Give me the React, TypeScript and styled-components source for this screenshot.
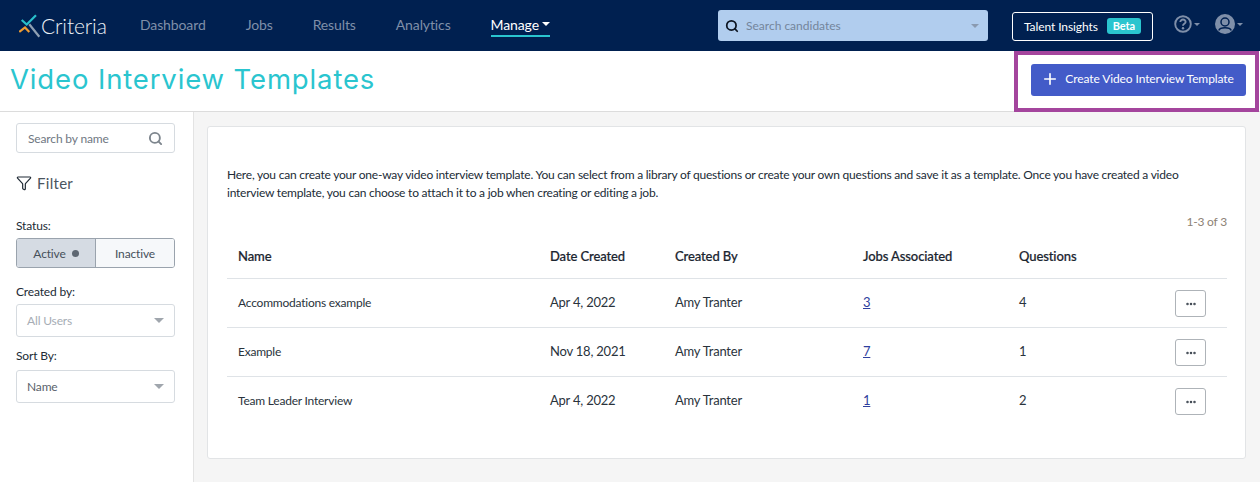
import styled, { createGlobalStyle } from "styled-components";
import { Search, Funnel, Plus, Ellipsis } from "lucide-react";

const GlobalStyle = createGlobalStyle`
  html, body {
    margin: 0;
    padding: 0;
    background: #fff;
    font-family: Lato, "Liberation Sans", sans-serif;
    color: #212b36;
  }
  * { box-sizing: border-box; }
`;

const Page = styled.div`
  width: 1260px;
  height: 482px;
  overflow: hidden;
  display: flex;
  flex-direction: column;
`;

const TopNav = styled.nav`
  height: 51px;
  flex: none;
  background: #002050;
  display: flex;
  align-items: center;
  padding-left: 19px;
`;

const Logo = styled.div`
  width: 88px;
  display: flex;
  align-items: center;
  color: #eef2f6;
  font-size: 21px;
  font-weight: 300;
  letter-spacing: -0.1px;
`;

const LogoWord = styled.span`
  margin-left: -2px;
`;

const NavLinks = styled.div`
  display: flex;
  gap: 40px;
  margin-left: 33px;
  width: 578px;
  letter-spacing: -0.12px;
`;

const NavLink = styled.span<{ $active?: boolean }>`
  font-size: 14px;
  line-height: 19px;
  height: 22px;
  margin-top: 1px;
  color: ${(p) => (p.$active ? "#fff" : "#7f8fa9")};
  border-bottom: ${(p) => (p.$active ? "2px solid #2ac5cf" : "none")};
  display: flex;
  align-items: flex-start;
  gap: 3px;
`;

const Caret = styled.span<{ $color?: string; $size?: number }>`
  display: inline-block;
  width: 0;
  height: 0;
  border-left: ${(p) => p.$size ?? 4}px solid transparent;
  border-right: ${(p) => p.$size ?? 4}px solid transparent;
  border-top: ${(p) => p.$size ?? 4}px solid ${(p) => p.$color ?? "#fff"};
`;

const MenuCaret = styled(Caret)`
  margin-top: 7px;
`;

const CandidateSearch = styled.div`
  width: 270px;
  height: 31px;
  background: #b1cdee;
  border-radius: 3px;
  display: flex;
  align-items: center;
  padding: 0 9px 0 7px;
  font-size: 12px;
  color: #74859c;
  gap: 7px;
`;

const Grow = styled.span`
  flex: 1;
`;

const InsightsButton = styled.div`
  width: 141px;
  height: 29px;
  margin-left: 24px;
  margin-top: 1px;
  border: 1px solid #fff;
  border-radius: 3px;
  color: #fff;
  font-size: 12px;
  letter-spacing: -0.1px;
  display: flex;
  align-items: center;
  justify-content: center;
  gap: 9px;
`;

const BetaBadge = styled.span`
  background: #2ac5cf;
  border-radius: 3px;
  font-size: 11px;
  font-weight: 700;
  padding: 1px 6px;
  line-height: 14px;
`;

const IconMenu = styled.div<{ $left: number }>`
  margin-left: ${(p) => p.$left}px;
  display: flex;
  align-items: center;
  gap: 2px;
  margin-top: -3px;
`;

const TitleBar = styled.header`
  height: 61px;
  flex: none;
  border-bottom: 1px solid #dcdcdc;
  display: flex;
  align-items: center;
  justify-content: space-between;
  padding: 0 14px 3px 10px;
  position: relative;
`;

const Title = styled.h1`
  margin: 0 0 1px;
  font-family: Inter, "Open Sans", sans-serif;
  font-size: 27.5px;
  font-weight: 400;
  color: #2ac5cf;
  letter-spacing: 0.86px;
`;

const CreateButton = styled.button`
  width: 215px;
  height: 32px;
  border: none;
  border-radius: 3px;
  background: #435bc8;
  color: #fff;
  font-family: inherit;
  font-size: 12px;
  letter-spacing: -0.1px;
  display: flex;
  align-items: center;
  justify-content: center;
  gap: 6px;
  padding: 0 2px 2px 0;
`;

const Highlight = styled.div`
  position: absolute;
  left: 1014px;
  top: 0;
  width: 245px;
  height: 61px;
  border: 4px solid #a4459d;
  pointer-events: none;
`;

const Body = styled.div`
  flex: 1;
  display: flex;
  min-height: 0;
`;

const Sidebar = styled.aside`
  width: 194px;
  flex: none;
  border-right: 1px solid #e3e3e3;
  padding: 11px 18px 0 16px;
  letter-spacing: -0.15px;
`;

const NameSearch = styled.div`
  height: 30px;
  border: 1px solid #d6dbe0;
  border-radius: 3px;
  display: flex;
  align-items: center;
  justify-content: space-between;
  padding: 0 11px;
  font-size: 12px;
  color: #6f7782;
`;

const FilterHeading = styled.div`
  display: flex;
  align-items: center;
  gap: 5px;
  margin-top: 20px;
  font-size: 15px;
  color: #4a5560;
  height: 20px;
  letter-spacing: 0.3px;
`;

const FieldLabel = styled.div<{ $top: number; $bottom?: number }>`
  margin-top: ${(p) => p.$top}px;
  margin-bottom: ${(p) => p.$bottom ?? 5}px;
  font-size: 12px;
  line-height: 15px;
  color: #212b36;
`;

const Toggle = styled.div`
  display: flex;
  height: 30px;
  border: 1px solid #9aa3ad;
  border-radius: 3px;
  overflow: hidden;
  font-size: 12px;
`;

const ToggleItem = styled.div<{ $on?: boolean }>`
  width: ${(p) => (p.$on ? 79 : 78)}px;
  background: ${(p) => (p.$on ? "#d5dbe3" : "#f6f8fa")};
  border-right: ${(p) => (p.$on ? "1px solid #9aa3ad" : "none")};
  display: flex;
  align-items: center;
  justify-content: center;
  gap: 6px;
  color: #46505a;
`;

const Dot = styled.span`
  width: 7px;
  height: 7px;
  border-radius: 50%;
  background: #5e6772;
`;

const SelectBox = styled.div<{ $muted?: boolean }>`
  height: 33px;
  border: 1px solid #d6dbe0;
  border-radius: 3px;
  display: flex;
  align-items: center;
  justify-content: space-between;
  padding: 0 10px;
  font-size: 12px;
  color: ${(p) => (p.$muted ? "#a6adb5" : "#59626c")};
`;

const Main = styled.main`
  flex: 1;
  background: #f5f5f5;
  padding: 14px 14px 22px 13px;
`;

const Card = styled.section`
  height: 333px;
  background: #fff;
  border: 1px solid #e2e4e6;
  border-radius: 3px;
  padding: 39px 18px 0 19px;
`;

const Intro = styled.p`
  margin: 0;
  font-size: 12px;
  line-height: 18px;
  letter-spacing: -0.22px;
  color: #212b36;
  width: 962px;
`;

const Count = styled.div`
  text-align: right;
  font-size: 12px;
  letter-spacing: -0.2px;
  color: #8d8275;
  margin-top: 12px;
  line-height: 16px;
`;

const Table = styled.table`
  width: 100%;
  border-collapse: collapse;
  table-layout: fixed;
  margin-top: 4px;
  font-size: 13px;
`;

const Th = styled.th<{ $w?: number }>`
  width: ${(p) => (p.$w ? `${p.$w}px` : "auto")};
  height: 44px;
  padding: 0 0 0 11px;
  text-align: left;
  font-weight: 500;
  font-size: 13px;
  letter-spacing: -0.1px;
  color: #1b2530;
  -webkit-text-stroke: 0.2px #1b2530;
  border-bottom: 1px solid #dfe3e7;
`;

const Td = styled.td`
  height: 49px;
  padding: 0 0 2px 11px;
  font-size: 13px;
  letter-spacing: -0.22px;
  color: #2a333c;
  border-bottom: 1px solid #dfe3e7;
  tr:last-child & {
    border-bottom: none;
  }
`;

const NameCell = styled(Td)`
  padding-bottom: 0;
  font-size: 12px;
`;

const ActionCell = styled(Td)`
  padding-bottom: 0;
`;

const JobsLink = styled.a`
  color: #2f3f9e;
  text-decoration: underline;
`;

const MoreButton = styled.button`
  width: 31px;
  height: 27px;
  margin: 2px 0 0;
  background: #fff;
  border: 1px solid #aeb3b8;
  border-radius: 3px;
  display: flex;
  align-items: center;
  justify-content: center;
  padding: 0;
  color: #3d4650;
`;

const rows = [
  { name: "Accommodations example", date: "Apr 4, 2022", jobs: 3, questions: 4 },
  { name: "Example", date: "Nov 18, 2021", jobs: 7, questions: 1 },
  { name: "Team Leader Interview", date: "Apr 4, 2022", jobs: 1, questions: 2 },
];

function CriteriaMark() {
  return (
    <svg width="24" height="24" viewBox="0 0 24 24" fill="none">
      <path d="M2.7 6 L7.7 10.6 L17 1.3" stroke="#29c0cb" strokeWidth="2.2" />
      <path d="M0.3 18 L6 13.4 L10.3 18" stroke="#ee9c33" strokeWidth="2.2" />
      <path d="M10.3 10.3 L20.3 22.7" stroke="#8fa0b3" strokeWidth="2.2" />
    </svg>
  );
}

function HelpIcon() {
  return (
    <svg width="18" height="18" viewBox="0 0 18 18" fill="none">
      <circle cx="9" cy="9" r="7.8" stroke="#7f8fa9" strokeWidth="1.9" />
      <path d="M6.3 7 C6.3 3.6 11.8 3.9 11.6 7 C11.5 8.9 9 8.6 9 10.7" stroke="#7f8fa9" strokeWidth="1.9" />
      <circle cx="9" cy="13.2" r="1.2" fill="#7f8fa9" />
    </svg>
  );
}

function UserIcon() {
  return (
    <svg width="20" height="20" viewBox="0 0 20 20">
      <circle cx="10" cy="10" r="10" fill="#7f8fa9" />
      <circle cx="10" cy="8" r="4" fill="#7f8fa9" stroke="#002050" strokeWidth="1.5" />
      <path d="M3.8 16.5 C5 12.8 15 12.8 16.2 16.5" fill="#7f8fa9" stroke="#002050" strokeWidth="1.5" />
    </svg>
  );
}

export default function App() {
  return (
    <Page>
      <GlobalStyle />
      <TopNav>
        <Logo>
          <CriteriaMark />
          <LogoWord>Criteria</LogoWord>
        </Logo>
        <NavLinks>
          <NavLink>Dashboard</NavLink>
          <NavLink>Jobs</NavLink>
          <NavLink>Results</NavLink>
          <NavLink>Analytics</NavLink>
          <NavLink $active>
            Manage
            <MenuCaret />
          </NavLink>
        </NavLinks>
        <CandidateSearch>
          <Search size={14} color="#0d1522" strokeWidth={3} />
          <Grow>Search candidates</Grow>
          <Caret $color="#8a9ab0" />
        </CandidateSearch>
        <InsightsButton>
          Talent Insights
          <BetaBadge>Beta</BetaBadge>
        </InsightsButton>
        <IconMenu $left={21}>
          <HelpIcon />
          <Caret $color="#7f8fa9" $size={3} />
        </IconMenu>
        <IconMenu $left={15}>
          <UserIcon />
          <Caret $color="#7f8fa9" $size={3} />
        </IconMenu>
      </TopNav>
      <TitleBar>
        <Title>Video Interview Templates</Title>
        <CreateButton>
          <Plus size={18} strokeWidth={2.2} />
          Create Video Interview Template
        </CreateButton>
        <Highlight />
      </TitleBar>
      <Body>
        <Sidebar>
          <NameSearch>
            Search by name
            <Search size={15} color="#7d858d" strokeWidth={3} />
          </NameSearch>
          <FilterHeading>
            <Funnel size={16} color="#212b36" strokeWidth={1.8} />
            Filter
          </FilterHeading>
          <FieldLabel $top={25}>Status:</FieldLabel>
          <Toggle>
            <ToggleItem $on>
              Active
              <Dot />
            </ToggleItem>
            <ToggleItem>Inactive</ToggleItem>
          </Toggle>
          <FieldLabel $top={16}>Created by:</FieldLabel>
          <SelectBox $muted>
            All Users
            <Caret $color="#a0a6ad" $size={5} />
          </SelectBox>
          <FieldLabel $top={11} $bottom={7}>
            Sort By:
          </FieldLabel>
          <SelectBox>
            Name
            <Caret $color="#a0a6ad" $size={5} />
          </SelectBox>
        </Sidebar>
        <Main>
          <Card>
            <Intro>
              Here, you can create your one-way video interview template. You can select from a library of questions or
              create your own questions and save it as a template. Once you have created a video interview template, you
              can choose to attach it to a job when creating or editing a job.
            </Intro>
            <Count>1-3 of 3</Count>
            <Table>
              <thead>
                <tr>
                  <Th $w={312}>Name</Th>
                  <Th $w={125}>Date Created</Th>
                  <Th $w={188}>Created By</Th>
                  <Th $w={156}>Jobs Associated</Th>
                  <Th $w={156}>Questions</Th>
                  <Th />
                </tr>
              </thead>
              <tbody>
                {rows.map((row) => (
                  <tr key={row.name}>
                    <NameCell>{row.name}</NameCell>
                    <Td>{row.date}</Td>
                    <Td>Amy Tranter</Td>
                    <Td>
                      <JobsLink href="#">{row.jobs}</JobsLink>
                    </Td>
                    <Td>{row.questions}</Td>
                    <ActionCell>
                      <MoreButton>
                        <Ellipsis size={12} strokeWidth={3} />
                      </MoreButton>
                    </ActionCell>
                  </tr>
                ))}
              </tbody>
            </Table>
          </Card>
        </Main>
      </Body>
    </Page>
  );
}
